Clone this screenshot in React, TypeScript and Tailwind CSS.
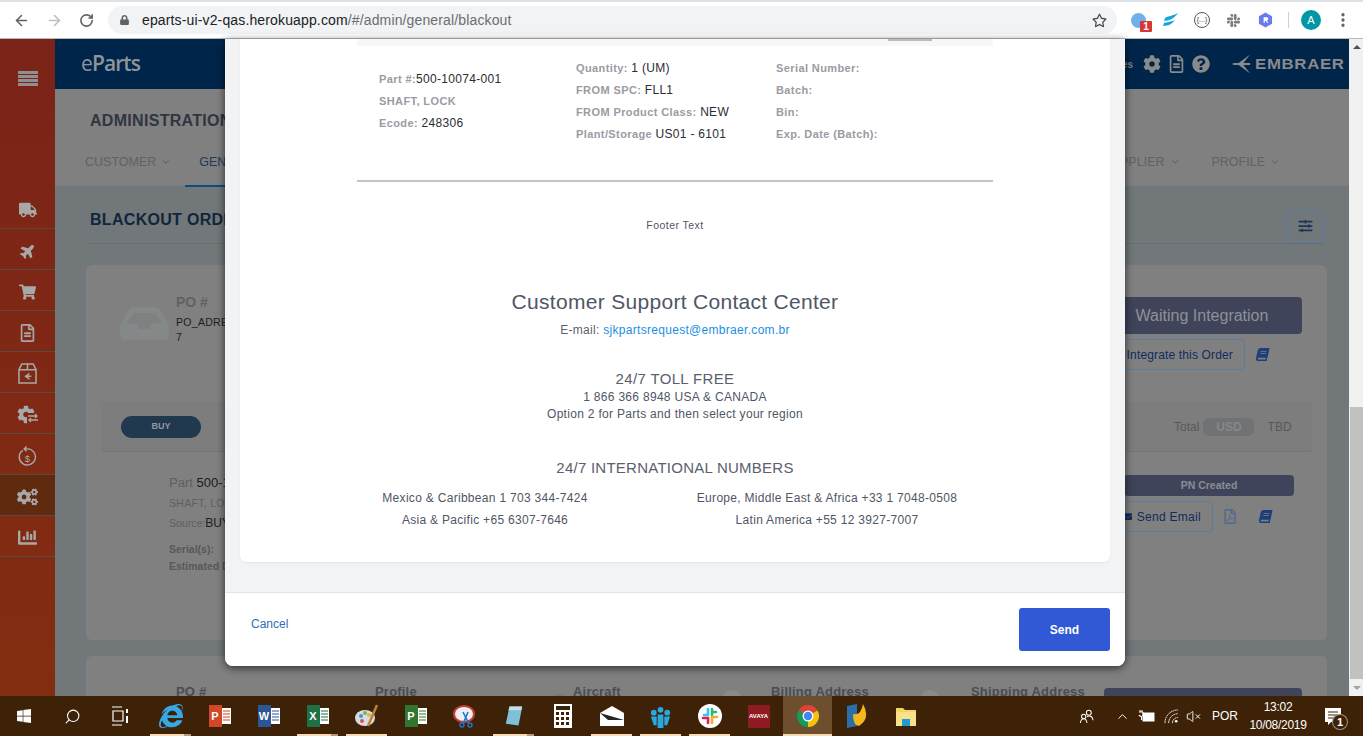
import React from "react";
import {
  FaTruck, FaPlane, FaShoppingCart, FaRegFileAlt, FaCogs, FaChartBar, FaCog, FaQuestionCircle,
  FaInbox, FaBook, FaRegFilePdf, FaEnvelope, FaSlidersH, FaLock, FaRegStar, FaWindows, FaSlack, FaInternetExplorer,
} from "react-icons/fa";
import { ArrowLeft, ArrowRight, RotateCw, ChevronDown, Search, ChevronUp, VolumeX, EllipsisVertical } from "lucide-react";

const font = "font-['Liberation_Sans',Arial,sans-serif]";

function Lbl({ k, v }: { k: string; v?: string }) {
  return (
    <div className="text-[11px] leading-[22px] h-[22px] whitespace-nowrap">
      <span className="font-bold text-[#9a9ba3] tracking-[0.4px]">{k}</span>
      {v && <span className="text-[12px] text-[#2b2d33] tracking-[0.3px]">{v}</span>}
    </div>
  );
}

function Tile({ c, t, lines }: { c: string; t: string; lines: string }) {
  return (
    <div className="flex items-center">
      <div className="w-[13px] h-[22px] flex items-center justify-center text-white font-bold text-[11px]" style={{ backgroundColor: c }}>{t}</div>
      <svg viewBox="0 0 9 16" className="w-[9px] h-[16px]">
        <rect width="9" height="16" fill="#fff" />
        <path d="M1 3 H8 M1 6 H8 M1 9 H8 M1 12 H8" stroke={lines} strokeWidth="1.2" />
      </svg>
    </div>
  );
}

function SideItem({ children, active }: { children: React.ReactNode; active?: boolean }) {
  return (
    <div className={`h-[41px] pt-[3px] flex items-center justify-center border-b border-[#5a4a40] text-[#a8a8a8] ${active ? "bg-[#5f2a0d]" : ""}`}>
      {children}
    </div>
  );
}

function TaskIcon({ children, w = "w-[49px]", active, bar, stack }: { children: React.ReactNode; w?: string; active?: boolean; bar?: boolean; stack?: boolean }) {
  return (
    <div className={`relative h-[40px] ${w} shrink-0 flex items-center justify-center ${active ? "bg-[#6d4f30]" : ""}`}>
      {children}
      {(bar || active) && (
        <div className={`absolute bottom-0 h-[2px] flex ${active ? "left-0 right-0" : "left-[4px] w-[41px]"}`}>
          <div className="flex-1 bg-[#f8d9b0]" />
          {stack && <div className="w-[7px] bg-[#b59a80]" />}
        </div>
      )}
    </div>
  );
}

export default function App() {
  return (
    <div className={`${font} relative w-[1363px] h-[736px] overflow-hidden flex flex-col bg-white`}>
      {/* browser bar */}
      <div className="h-[39px] shrink-0 bg-white border-b border-[#b9b9b9] border-t-2 border-t-[#dee1e6] flex items-center">
        <ArrowLeft className="ml-[13px] w-[17px] h-[17px] text-[#5f6368]" strokeWidth={2.2} />
        <ArrowRight className="ml-[16px] w-[17px] h-[17px] text-[#bcbec1]" strokeWidth={2.2} />
        <RotateCw className="ml-[16px] w-[15px] h-[15px] text-[#5f6368]" strokeWidth={2.6} />
        <div className="ml-[14px] w-[1009px] shrink-0 h-[28px] rounded-full bg-[#f1f3f4] flex items-center">
          <FaLock className="ml-[12px] w-[9px] h-[10px] text-[#5f6368]" />
          <span className="ml-[13px] text-[14px] tracking-[0.14px] text-[#202124]">eparts-ui-v2-qas.herokuapp.com<span className="text-[#6b6e72]">/#/admin/general/blackout</span></span>
          <FaRegStar className="ml-auto mr-[10px] w-[15px] h-[15px] text-[#4a4d50]" />
        </div>
        <div className="relative ml-[14px] w-[15px] h-[15px] rounded-full bg-[#6fb1e8] shrink-0">
          <div className="absolute left-[9px] top-[8px] w-[12px] h-[11px] bg-[#d93636] rounded-[1px] text-white text-[10px] leading-[11px] font-bold text-center">1</div>
        </div>
        <svg viewBox="0 0 18 16" className="ml-[15px] w-[18px] h-[16px] shrink-0"><path d="M2 14 C8 14 12 11 14 8 C10 10 5 10 3 11 Z M3 9 C8 9 14 6 17 1 C12 4 7 4 4 6 Z" fill="#14a6e0" /></svg>
        <div className="ml-[15px] w-[16px] h-[16px] rounded-full border border-[#555] shrink-0 flex items-center justify-center text-[7px] text-[#444]">{"{...}"}</div>
        <FaSlack className="ml-[16px] w-[15px] h-[15px] text-[#7c7c7c] shrink-0" />
        <svg viewBox="0 0 16 16" className="ml-[17px] w-[15px] h-[16px] shrink-0"><path d="M8 0 L15 4 V12 L8 16 L1 12 V4 Z" fill="#6a7bef" /><path d="M6 5 H9.5 Q11 5 11 7 Q11 8.4 9.5 8.7 L11 11 H9.6 L8.2 8.8 H7.2 V11 H6 Z" fill="#fff" /></svg>
        <div className="ml-[15px] w-px h-[16px] bg-[#d0d0d0] shrink-0" />
        <div className="ml-[12px] w-[20px] h-[20px] rounded-full bg-[#0097a7] text-white text-[11px] flex items-center justify-center shrink-0">A</div>
        <EllipsisVertical className="ml-[13px] w-[18px] h-[18px] text-[#5f6368] shrink-0" strokeWidth={2.4} />
      </div>

      {/* page */}
      <div className="flex-1 min-h-0 flex relative">
        <div className="flex-1 min-w-0 flex bg-[#72777a]">
          {/* sidebar */}
          <div className="w-[55px] shrink-0 bg-gradient-to-b from-[#7b2318] to-[#832d10] flex flex-col">
            <div className="h-[149px] flex items-start justify-center pt-[32px] shrink-0">
              <svg viewBox="0 0 20 15" className="w-[20px] h-[15px]" fill="#8f8f8f"><rect width="20" height="3" /><rect y="4" width="20" height="3" /><rect y="8" width="20" height="3" /><rect y="12" width="20" height="3" /></svg>
            </div>
            <SideItem><FaTruck className="w-[18px] h-[18px]" /></SideItem>
            <SideItem><FaPlane className="w-[16px] h-[16px] -rotate-45" /></SideItem>
            <SideItem><FaShoppingCart className="w-[17px] h-[16px]" /></SideItem>
            <SideItem><FaRegFileAlt className="w-[15px] h-[18px]" /></SideItem>
            <SideItem>
              <svg viewBox="0 0 20 22" className="w-[19px] h-[21px]" fill="none" stroke="currentColor" strokeWidth="1.6"><path d="M1 7 L4 1 H16 L19 7 V21 H1 Z M1 7 H19 M10 1 V7" /><path d="M12 11 L8 14 L12 17 M8 14 H14" /></svg>
            </SideItem>
            <SideItem>
              <span className="relative block w-[22px] h-[19px]">
                <FaCog className="absolute left-0 top-0 w-[18px] h-[19px]" />
                <svg viewBox="0 0 12 10" className="absolute right-0 bottom-[1px] w-[12px] h-[10px] bg-[#7f2812]" fill="none" stroke="currentColor" strokeWidth="1.3"><path d="M1 3 H10 M8 1 L10 3 L8 5 M11 7 H2 M4 5 L2 7 L4 9" /></svg>
              </span>
            </SideItem>
            <SideItem>
              <svg viewBox="0 0 20 22" className="w-[19px] h-[22px]" fill="none" stroke="currentColor" strokeWidth="1.5"><path d="M5 5 A8.5 8.5 0 1 0 10 3.5 H7 M9 1 L6.5 3.5 L9 6" /><text x="10" y="17" fontSize="10" textAnchor="middle" fill="currentColor" stroke="none" fontFamily="Liberation Sans">$</text></svg>
            </SideItem>
            <SideItem active><FaCogs className="w-[21px] h-[18px]" /></SideItem>
            <SideItem><FaChartBar className="w-[21px] h-[19px]" /></SideItem>
          </div>

          {/* main */}
          <div className="flex-1 min-w-0 flex flex-col">
            <div className="h-[50px] shrink-0 bg-[#00254a] flex items-center text-[#8a8a8a]">
              <span className="ml-[26px] text-[21px] font-['Open_Sans',sans-serif] tracking-[-0.9px] text-[#8f9499]"><span className="font-normal">e</span><span className="font-semibold">Parts</span></span>
              <span className="ml-auto text-[10px] font-bold text-[#7f7f7f]">es</span>
              <FaCog className="ml-[10px] w-[18px] h-[18px]" />
              <FaRegFileAlt className="ml-[8px] w-[15px] h-[18px]" />
              <FaQuestionCircle className="ml-[8px] w-[18px] h-[18px]" />
              <svg viewBox="0 0 20 20" className="ml-[22px] w-[19px] h-[20px]"><path d="M19 0 L7 9 H2 L0 10 L2 11 H7 L19 20 L12 11 H19 V9 H12 Z" fill="#8a8a8a" /></svg>
              <span className="ml-[4px] mr-[4px] text-[15px] font-bold tracking-[0.6px] scale-x-[1.12] origin-left w-[90px]">EMBRAER</span>
            </div>
            <div className="h-[98px] shrink-0 bg-[#808080] border-b border-[#6f777c] flex flex-col">
              <div className="ml-[35px] mt-[23px] text-[16px] leading-[18px] font-bold text-[#2f3640] tracking-[0.3px] whitespace-nowrap">ADMINISTRATION</div>
              <div className="mt-[11px] h-[45px] flex items-start text-[12.5px] text-[#5e6266] pt-[11px]">
                <span className="ml-[30px] mt-[1px] flex items-center gap-[5px]">CUSTOMER <ChevronDown className="w-[10px] h-[10px]" strokeWidth={2.5} /></span>
                <span className="ml-[14px] pt-[1px] w-[40px] h-[35px] border-b-2 border-[#0c4a8a] text-[#1f3b57]"><span className="ml-[14px]">GEN</span></span>
                <span className="ml-auto mt-[1px] flex items-center gap-[5px]">PPLIER <ChevronDown className="w-[10px] h-[10px]" strokeWidth={2.5} /></span>
                <span className="ml-[32px] mr-[69px] mt-[1px] flex items-center gap-[5px]">PROFILE <ChevronDown className="w-[10px] h-[10px]" strokeWidth={2.5} /></span>
              </div>
            </div>
            <div className="flex-1 min-h-0 overflow-hidden pl-[31px] pr-[22px]">
              <div className="mx-[4px] h-[57px] flex items-end border-b border-[#676d71] pb-[2px]">
                <div className="text-[16px] leading-[18px] font-bold text-[#10263a] tracking-[0.3px] mb-[12px]">BLACKOUT ORDERS</div>
                <div className="ml-auto w-[36px] h-[30px] rounded-[4px] border border-[#5a7da3] flex items-center justify-center"><FaSlidersH className="w-[15px] h-[14px] text-[#1c3558]" /></div>
              </div>
              <div className="mt-[21px] h-[375px] bg-[#808080] rounded-[6px] flex flex-col px-[15px]">
                <div className="h-[137px] flex shrink-0">
                  <FaInbox className="ml-[19px] mt-[37px] w-[49px] h-[43px] text-[#858889]" />
                  <div className="ml-[7px] mt-[27px] w-[60px]">
                    <div className="text-[14px] font-bold text-[#5f6266]">PO #</div>
                    <div className="mt-[2px] text-[10.5px] leading-[15px] text-[#1c1c1c] tracking-[0.3px] whitespace-nowrap">PO_ADRESS<br />7</div>
                  </div>
                  <div className="ml-auto mr-[10px] mt-[32px] w-[200px] flex flex-col">
                    <div className="h-[37px] rounded-[4px] bg-[#40445a] text-[#8f9098] text-[16px] flex items-center justify-center whitespace-nowrap">Waiting Integration</div>
                    <div className="mt-[5px] flex items-center">
                      <div className="h-[31px] w-[143px] pr-[11px] rounded-[4px] border border-[#5a7da3] flex items-center justify-end text-[12px] tracking-[0.15px] text-[#0f2d5c] whitespace-nowrap">Integrate this Order</div>
                      <FaBook className="ml-[11px] w-[13px] h-[13px] -skew-x-12 text-[#1c3f7c]" />
                    </div>
                  </div>
                </div>
                <div className="h-[50px] shrink-0 bg-[#7d7d7d] border-b border-[#767676] rounded-[4px] flex items-center">
                  <div className="ml-[20px] w-[80px] h-[22px] rounded-full bg-[#21394f] text-[#92979c] text-[9px] font-bold flex items-center justify-center">BUY</div>
                  <span className="ml-auto text-[12px] text-[#55585c]">Total</span>
                  <div className="ml-[4px] w-[51px] h-[18px] rounded-[6px] bg-[#6f7373] text-[#85898a] text-[12px] font-bold flex items-center justify-center">USD</div>
                  <span className="ml-[13px] mr-[20px] text-[12px] tracking-[0.2px] text-[#55585c]">TBD</span>
                </div>
                <div className="flex flex-1">
                  <div className="ml-[68px] mt-[22px] w-[60px] whitespace-nowrap">
                    <div className="text-[13px] leading-[18px] text-[#5c5f63]">Part <span className="text-[#1c1c1c]">500-10074-001</span></div>
                    <div className="mt-[4px] text-[10.5px] leading-[14px] tracking-[0.3px] text-[#5c5f63]">SHAFT, LOCK</div>
                    <div className="mt-[6px] text-[10.5px] leading-[14px] text-[#5c5f63]">Source:<span className="text-[#1c1c1c] text-[12px]">BUY</span></div>
                    <div className="mt-[12px] text-[10.5px] leading-[14px] font-bold text-[#55585c]">Serial(s):</div>
                    <div className="mt-[3px] text-[10.5px] leading-[14px] font-bold text-[#55585c]">Estimated Delivery</div>
                  </div>
                  <div className="ml-auto mr-[18px] mt-[23px] w-[170px] flex flex-col">
                    <div className="h-[21px] rounded-[4px] bg-[#40445a] text-[#8b8c94] text-[10.5px] font-bold flex items-center justify-center">PN Created</div>
                    <div className="mt-[5px] flex items-center">
                      <div className="-ml-[20px] h-[31px] w-[109px] pr-[11px] rounded-[4px] border border-[#5a7da3] flex items-center justify-end gap-[5px] text-[12px] tracking-[0.3px] text-[#0f2d5c] whitespace-nowrap"><FaEnvelope className="w-[9px] h-[9px]" />Send Email</div>
                      <FaRegFilePdf className="ml-[11px] w-[12px] h-[15px] text-[#4f6a8c]" />
                      <FaBook className="ml-[23px] w-[13px] h-[13px] -skew-x-12 text-[#1c3f7c]" />
                    </div>
                  </div>
                </div>
              </div>
              <div className="relative mt-[16px] h-[100px] bg-[#808080] rounded-[6px] pt-[26px] text-[13px] font-bold text-[#4a4c50] tracking-[0.2px]">
                <div className="flex whitespace-nowrap">
                  <span className="ml-[90px] w-[199px]">PO #</span>
                  <span className="w-[198px]">Profile</span>
                  <span className="w-[198px]">Aircraft</span>
                  <span className="w-[200px]">Billing Address</span>
                  <span>Shipping Address</span>
                </div>
                <div className="absolute left-[1018px] top-[32px] w-[198px] h-[37px] rounded-[4px] bg-[#40445a]" />
                <div className="absolute left-[467px] top-[38px] w-[12px] h-[12px] rounded-full bg-[#767676]" />
                <div className="absolute left-[636px] top-[34px] w-[20px] h-[20px] rounded-full bg-[#8a8a8a]" />
                <div className="absolute left-[834px] top-[34px] w-[20px] h-[20px] rounded-full bg-[#8a8a8a]" />
              </div>
            </div>
          </div>
        </div>

        {/* scrollbar */}
        <div className="w-[14px] shrink-0 bg-[#f1f1f1] flex flex-col items-end">
          <div className="w-[13px] h-[15px] shrink-0 flex items-center justify-center"><div className="w-0 h-0 border-x-[4px] border-x-transparent border-b-[4px] border-b-[#505050]" /></div>
          <div className="flex-1" />
          <div className="w-[13px] h-[272px] bg-[#c1c1c1] shrink-0" />
          <div className="w-[13px] h-[17px] shrink-0 flex items-center justify-center"><div className="w-0 h-0 border-x-[4px] border-x-transparent border-t-[4px] border-t-[#a3a3a3]" /></div>
        </div>

        {/* modal */}
        <div className="absolute left-[225px] top-0 w-[900px] h-[627px] bg-[#f2f3f5] rounded-b-[8px] shadow-[0_2px_8px_rgba(0,0,0,0.65)] flex flex-col overflow-hidden z-10">
          <div className="mx-[15px] h-[523px] bg-white rounded-b-[6px] shadow-[0_1px_2px_rgba(0,0,0,0.06)] shrink-0 px-[117px]">
            <div className="h-[7px] bg-[#f7f7f7] relative"><div className="absolute left-[531px] top-0 w-[44px] h-[2px] bg-[#bdbdbd]" /></div>
            <div className="flex h-[136px] border-b-2 border-[#bfc4c8]">
              <div className="w-[197px] ml-[22px] pt-[22px]">
                <Lbl k="Part #:" v="500-10074-001" />
                <Lbl k="SHAFT, LOCK" />
                <Lbl k="Ecode: " v="248306" />
              </div>
              <div className="w-[200px] pt-[11px]">
                <Lbl k="Quantity: " v="1 (UM)" />
                <Lbl k="FROM SPC: " v="FLL1" />
                <Lbl k="FROM Product Class: " v="NEW" />
                <Lbl k="Plant/Storage " v="US01 - 6101" />
              </div>
              <div className="pt-[11px]">
                <Lbl k="Serial Number:" />
                <Lbl k="Batch:" />
                <Lbl k="Bin:" />
                <Lbl k="Exp. Date (Batch):" />
              </div>
            </div>
            <div className="mt-[36px] text-center text-[10.5px] leading-[14px] text-[#4f5666] tracking-[0.45px]">Footer Text</div>
            <div className="mt-[57px] text-center text-[21px] leading-[26px] text-[#4f5666] tracking-[0.3px]">Customer Support Contact Center</div>
            <div className="mt-[7px] text-center text-[12px] leading-[16px] text-[#5b606c] tracking-[0.3px]">E-mail: <span className="text-[#1a8fe3]">sjkpartsrequest@embraer.com.br</span></div>
            <div className="mt-[31px] text-center text-[15px] leading-[20px] text-[#5b606c] tracking-[0.35px]">24/7 TOLL FREE</div>
            <div className="text-center text-[12px] leading-[17px] text-[#4f5666] tracking-[0.3px]">1 866 366 8948 USA &amp; CANADA</div>
            <div className="text-center text-[12px] leading-[17px] text-[#4f5666] tracking-[0.3px]">Option 2 for Parts and then select your region</div>
            <div className="mt-[36px] text-center text-[15px] leading-[18px] text-[#5b606c] tracking-[0.25px]">24/7 INTERNATIONAL NUMBERS</div>
            <div className="mt-[10px] grid grid-cols-2 text-center text-[12px] leading-[22px] text-[#4f5666] tracking-[0.3px] -mx-[2px]">
              <div className="mr-[60px] whitespace-nowrap">Mexico &amp; Caribbean 1 703 344-7424</div>
              <div className="-ml-[16px] whitespace-nowrap">Europe, Middle East &amp; Africa +33 1 7048-0508</div>
              <div className="mr-[60px] whitespace-nowrap">Asia &amp; Pacific +65 6307-7646</div>
              <div className="-ml-[16px] whitespace-nowrap">Latin America +55 12 3927-7007</div>
            </div>
          </div>
          <div className="mt-[30px] flex-1 bg-white border-t border-[#e3e4e6] flex items-start pr-[15px]">
            <span className="ml-[26px] mt-[22px] text-[12px] text-[#2f6fb5]">Cancel</span>
            <button className="ml-auto mt-[15px] w-[91px] h-[43px] rounded-[3px] bg-[#3159d6] text-white text-[12px] font-bold">Send</button>
          </div>
        </div>
      </div>

      {/* taskbar */}
      <div className="h-[40px] shrink-0 bg-[#3d2208] flex items-center text-white relative z-20">
        <TaskIcon w="w-[48px]"><FaWindows className="w-[16px] h-[16px]" /></TaskIcon>
        <TaskIcon w="w-[48px]"><Search className="w-[17px] h-[17px] -scale-x-100" strokeWidth={1.5} /></TaskIcon>
        <TaskIcon w="w-[50px]">
          <svg viewBox="0 0 18 20" className="w-[18px] h-[20px]" fill="none" stroke="#fff" strokeWidth="1.2"><path d="M0 1 H10 M0 19 H10 M1 5 H11 V15 H1 Z" /><path d="M15 3 V7 M15 10 V17" strokeWidth="2" /></svg>
        </TaskIcon>
        <TaskIcon bar stack>
          <FaInternetExplorer className="w-[24px] h-[24px] text-[#35a9e6]" />
        </TaskIcon>
        <TaskIcon><Tile c="#d24726" t="P" lines="#d24726" /></TaskIcon>
        <TaskIcon><Tile c="#2b5797" t="W" lines="#2b5797" /></TaskIcon>
        <TaskIcon bar stack><Tile c="#1e7145" t="X" lines="#1e7145" /></TaskIcon>
        <TaskIcon bar>
          <svg viewBox="0 0 24 24" className="w-[24px] h-[24px]"><ellipse cx="10" cy="14" rx="10" ry="8" fill="#d9dde2" /><circle cx="6" cy="12" r="2" fill="#3a9ad9" /><circle cx="10" cy="9" r="2" fill="#7ab648" /><circle cx="14" cy="11" r="2" fill="#e8b33a" /><circle cx="7" cy="17" r="2" fill="#d9534f" /><path d="M22 1 L13 22" stroke="#b9803a" strokeWidth="2.5" /></svg>
        </TaskIcon>
        <TaskIcon><Tile c="#31752f" t="P" lines="#31752f" /></TaskIcon>
        <TaskIcon>
          <svg viewBox="0 0 24 24" className="w-[24px] h-[24px]"><ellipse cx="11" cy="10" rx="10" ry="8" fill="#eee" stroke="#c93b3b" strokeWidth="2" /><path d="M10 8 L16 20 M15 8 L10 20" stroke="#1d78c9" strokeWidth="1.6" /><circle cx="9" cy="21" r="2" fill="none" stroke="#1d78c9" strokeWidth="1.4" /><circle cx="17" cy="21" r="2" fill="none" stroke="#1d78c9" strokeWidth="1.4" /></svg>
        </TaskIcon>
        <TaskIcon bar stack>
          <svg viewBox="0 0 22 24" className="w-[20px] h-[23px]"><path d="M6 1 H20 L16 22 L2 20 Z" fill="#7ec1d6" /><path d="M6 1 H20 L19 5 H5 Z" fill="#c4dfe8" /></svg>
        </TaskIcon>
        <TaskIcon>
          <div className="w-[18px] h-[24px] bg-white flex flex-col items-center pt-[2px] gap-[2px]">
            <div className="w-[14px] h-[4px] bg-[#3d2208]" />
            <div className="grid grid-cols-3 gap-x-[2px] gap-y-[2px]">
              {Array.from({ length: 9 }).map((_, i) => <div key={i} className="w-[3px] h-[3px] bg-[#3d2208]" />)}
            </div>
          </div>
        </TaskIcon>
        <TaskIcon bar>
          <svg viewBox="0 0 24 20" className="w-[24px] h-[20px]"><path d="M0 7 L12 0 L24 7 V20 H0 Z" fill="#fff" /><path d="M0 7 L24 14 L8 14 Z" fill="#000" opacity="0.85" /></svg>
        </TaskIcon>
        <TaskIcon bar>
          <svg viewBox="0 0 24 24" className="w-[23px] h-[23px]" fill="#29a8e0"><circle cx="12" cy="5" r="3" /><circle cx="5" cy="8" r="3" /><circle cx="19" cy="8" r="3" /><path d="M2 12 H8 V21 H5 Z M9 10 H15 V24 H9 Z M16 12 H22 L19 21 H16 Z" /></svg>
        </TaskIcon>
        <TaskIcon bar>
          <svg viewBox="0 0 24 24" className="w-[24px] h-[24px]" strokeWidth="2.6" strokeLinecap="round">
            <circle cx="12" cy="12" r="12" fill="#fff" />
            <path d="M10 5 V11 M6 11 H10" stroke="#36c5f0" fill="none" />
            <path d="M14 5 V11 M14 8 H18" stroke="#2eb67d" fill="none" />
            <path d="M14 13 H19 M14 13 V19" stroke="#ecb22e" fill="none" />
            <path d="M5 14 H10 V19" stroke="#e01e5a" fill="none" />
          </svg>
        </TaskIcon>
        <TaskIcon><div className="w-[22px] h-[23px] bg-[#8f1a22] text-white text-[6px] font-bold flex items-center justify-center text-center leading-[7px]">AVAYA</div></TaskIcon>
        <TaskIcon active>
          <svg viewBox="0 0 24 24" className="w-[24px] h-[24px]">
            <path d="M12 12 L2.47 6.5 A11 11 0 0 1 21.53 6.5 Z" fill="#db4437" />
            <path d="M12 12 L21.53 6.5 A11 11 0 0 1 12 23 Z" fill="#f4c20d" />
            <path d="M12 12 L12 23 A11 11 0 0 1 2.47 6.5 Z" fill="#0f9d58" />
            <circle cx="12" cy="12" r="5.5" fill="#fff" />
            <circle cx="12" cy="12" r="4.2" fill="#4285f4" />
          </svg>
        </TaskIcon>
        <TaskIcon>
          <svg viewBox="0 0 24 24" className="w-[24px] h-[24px]"><path d="M2 2 L12 0 V22 L2 24 Z" fill="#2a6fa8" /><path d="M8 10 Q16 12 18 0 Q26 14 14 22 Q8 22 8 10 Z" fill="#f2b81e" /></svg>
        </TaskIcon>
        <TaskIcon>
          <svg viewBox="0 0 22 22" className="w-[22px] h-[22px]"><path d="M1 3 H8 L10 5 H21 V21 H1 Z" fill="#f6d365" /><rect x="1" y="7" width="20" height="14" fill="#fbe08a" /><rect x="7" y="14" width="8" height="7" fill="#1f9ad6" /></svg>
        </TaskIcon>
        <div className="ml-auto flex items-center h-[40px] mr-[21px]">
          <svg viewBox="0 0 16 16" className="w-[15px] h-[15px]" fill="none" stroke="#fff" strokeWidth="1.1"><circle cx="10.5" cy="4" r="2.6" /><circle cx="5" cy="8" r="2.3" /><path d="M1.5 15 Q2 10.5 5 10.5 Q8 10.5 8.5 15 M8.5 8 Q11 6.8 13 8 Q14.5 9 15 12" /></svg>
          <ChevronUp className="ml-[21px] w-[15px] h-[15px]" strokeWidth={1.5} />
          <svg viewBox="0 0 17 13" className="ml-[8px] w-[17px] h-[13px]" fill="#fff"><rect x="5" y="3" width="11" height="8" stroke="#fff" strokeWidth="1" fill="#fff" /><path d="M2 0 V2 M4 0 V2 M1 2 H5 V5 Q5 6.5 3.5 6.5 V10 M3 6.5 Q1 6.5 1 5 Z" stroke="#fff" strokeWidth="1" fill="none" /></svg>
          <svg viewBox="0 0 16 16" className="ml-[9px] w-[15px] h-[15px]" fill="none" stroke="#fff" strokeWidth="1"><path d="M1 15 A14 14 0 0 1 15 1 M5 15 A10 10 0 0 1 15 5 M9 15 A6 6 0 0 1 15 9" strokeDasharray="2 0.6" /><circle cx="13" cy="13" r="1.4" fill="#fff" stroke="none" /></svg>
          <VolumeX className="ml-[7px] w-[15px] h-[15px]" strokeWidth={1.5} />
          <span className="ml-[11px] text-[12px]">POR</span>
          <div className="ml-[9px] text-[12px] leading-[18px] tracking-[-0.3px] text-center w-[62px] whitespace-nowrap">13:02<br />10/08/2019</div>
          <div className="relative ml-[15px] w-[18px] h-[18px]">
            <svg viewBox="0 0 18 18" className="w-[18px] h-[18px]"><path d="M1 1 H17 V15 H7 L4 18 V15 H1 Z" fill="#fff" /><path d="M4 5 H14 M4 8 H14 M4 11 H11" stroke="#3d2208" strokeWidth="1" /></svg>
            <div className="absolute -right-[6px] -bottom-[5px] w-[16px] h-[16px] rounded-full bg-[#3d2208] border border-white/50 text-[11px] leading-[14px] text-center font-bold">1</div>
          </div>
        </div>
      </div>
    </div>
  );
}
